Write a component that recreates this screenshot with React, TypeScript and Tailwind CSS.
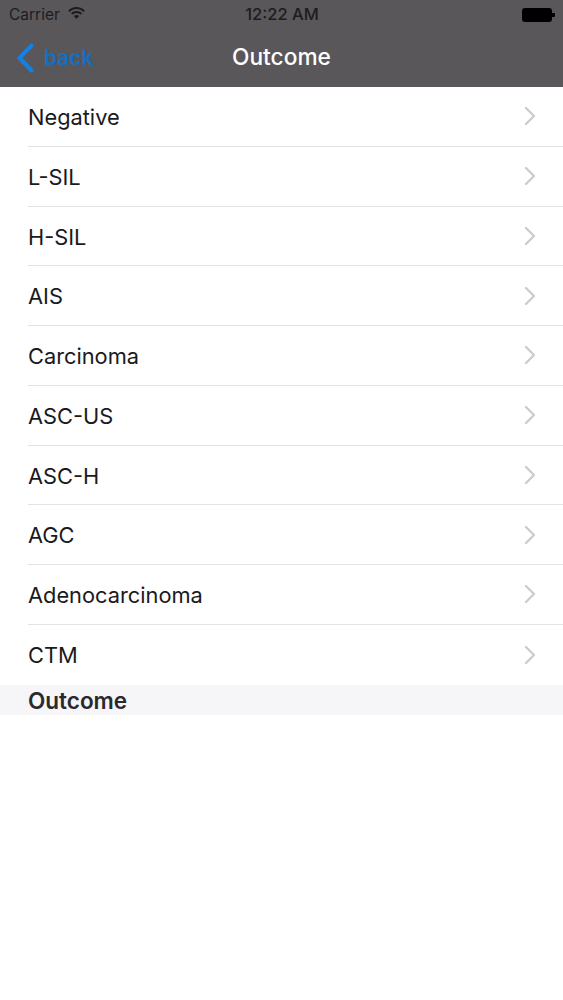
const items = ["Negative","L-SIL","H-SIL","AIS","Carcinoma","ASC-US","ASC-H","AGC","Adenocarcinoma","CTM"];
const font = "font-['Inter','Liberation_Sans',sans-serif]";

function Wifi() {
  return (
    <svg width="17" height="12" viewBox="0 0 17 12" fill="#1c1c1e">
      <path d="M8.5 0C5.2 0 2.3 1.3 0.2 3.4L1.6 4.9C3.4 3.1 5.8 2 8.5 2s5.100 1.100 6.900 2.900L16.800 3.400C14.700 1.300 11.800 0 8.500 0z" />
      <path d="M8.500 4C6.300 4 4.400 4.900 3 6.300L4.400 7.800C5.500 6.700 6.900 6 8.500 6s3 .7 4.100 1.800L14 6.300C12.600 4.900 10.700 4 8.500 4z" />
      <path d="M8.500 8C7.400 8 6.500 8.400 5.800 9.100L8.500 12l2.700-2.900C10.500 8.400 9.600 8 8.500 8z" />
    </svg>
  );
}

export default function App() {
  return (
    <div className={`w-[563px] h-[1000px] bg-white flex flex-col overflow-hidden ${font}`}>
      <header className="h-[87px] shrink-0 bg-[#59575a] flex flex-col">
        <div className="h-[29px] shrink-0 grid grid-cols-3 items-center pl-[9px] pr-[8px] text-[#1c1c1e]">
          <div className="flex items-center gap-[8px] text-[15.500px]">
            <span>Carrier</span>
            <span className="-mt-[3px]"><Wifi /></span>
          </div>
          <div className="text-center font-medium text-[16.500px] whitespace-nowrap">12:22 AM</div>
          <div className="flex justify-end items-center">
            <div className="w-[30px] h-[14px] rounded-[3px] bg-black" />
            <div className="w-[3px] h-[4px] bg-black rounded-r-[1px]" />
          </div>
        </div>
        <div className="flex-1 grid grid-cols-3 items-center pl-[16px] pr-[16px] pb-[1px]">
          <div className="flex items-center gap-[10px]">
            <svg width="18" height="30" viewBox="0 0 18 30" fill="none" stroke="#1280e6" strokeWidth="4" strokeLinecap="round" strokeLinejoin="round">
              <path d="M15.500 2.500 3.500 15l12 12.500" />
            </svg>
            <span className="text-[21px] text-[#1170c4] font-semibold">back</span>
          </div>
          <div className="text-center text-white text-[22.700px] font-medium whitespace-nowrap">Outcome</div>
        </div>
      </header>
      <ul className="flex flex-col">
        {items.map((t, i) => (
          <li key={t} className="h-[59.750px] pl-[28px]">
            <div className={`h-full flex items-center pr-[27px] ${i < items.length - 1 ? "border-b border-[#e3e3e5]" : ""}`}>
              <span className="flex-1 text-[21.800px] text-[#1a1a1c] pt-[2px]">{t}</span>
              <svg width="12" height="20" viewBox="0 0 12 20" fill="none" stroke="#cdcdd1" strokeWidth="2.400" strokeLinecap="round" strokeLinejoin="round">
                <path d="M2 2 10 10l-8 8" />
              </svg>
            </div>
          </li>
        ))}
      </ul>
      <div className="h-[30px] bg-[#f6f5f8] pl-[28px] pt-[2px] flex items-center text-[22.500px] font-semibold text-[#2a2a2e]">Outcome</div>
    </div>
  );
}
